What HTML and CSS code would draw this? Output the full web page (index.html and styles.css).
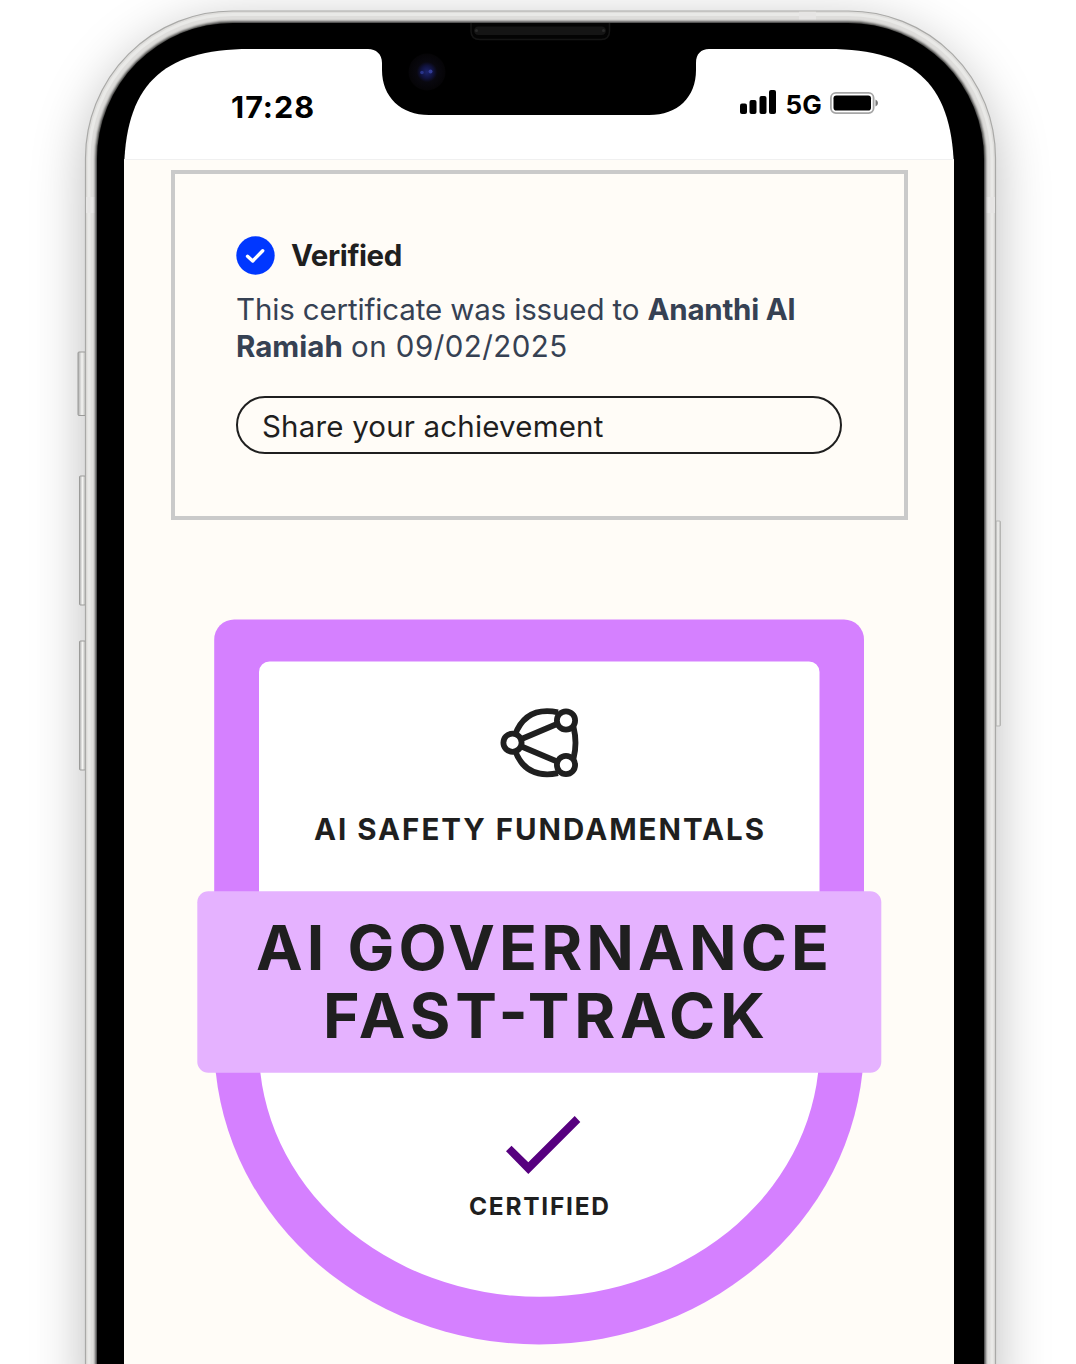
FILE: index.html
```html
<!DOCTYPE html>
<html lang="en">
<head>
<meta charset="utf-8">
<title>AI Safety Fundamentals certificate</title>
<link rel="stylesheet" href="styles.css">
</head>
<body>
<main class="stage">
  <div class="shadow"></div>
  <svg class="hardware" viewBox="0 0 1076 1364" aria-hidden="true">
    <defs>
      <linearGradient id="btn" x1="0" x2="1" y1="0" y2="0">
        <stop offset="0" stop-color="#aaa"/><stop offset=".5" stop-color="#f4f4f2"/><stop offset="1" stop-color="#b5b5b3"/>
      </linearGradient>
      <radialGradient id="lens">
        <stop offset="0" stop-color="#1c246e"/><stop offset=".35" stop-color="#10123c"/><stop offset=".55" stop-color="#09080f"/><stop offset="1" stop-color="#050406"/>
      </radialGradient>
      <filter id="soft" x="-5%" y="-5%" width="110%" height="110%"><feGaussianBlur stdDeviation="1.1"/></filter>
    </defs>
    <!-- side buttons -->
    <g fill="url(#btn)" stroke="#9b9b99" stroke-width="1">
      <rect x="78" y="352" width="8" height="63.500" rx="1"/>
      <rect x="79.500" y="476" width="6" height="129" rx="1"/>
      <rect x="79.500" y="641" width="6" height="129" rx="1"/>
      <rect x="995.500" y="521" width="5" height="205" rx="1" stroke="#b5b5b3"/>
    </g>
    <!-- metal band and bezel -->
    <rect x="85.500" y="11" width="910" height="1500" rx="147" fill="#dedddb" stroke="#a9a9a7" stroke-width="1.200"/>
    <rect x="89" y="14.500" width="903" height="1500" rx="144" fill="none" stroke="#e9e9e7" stroke-width="3"/>
    <path d="M86 197h9v16h-9zM986 197h9v16h-9zM799 11.700h17v8h-17z" fill="#e6e5e4"/>
    <rect x="96" y="22" width="889" height="1500" rx="137" fill="#000" stroke="#5d5d5b" stroke-width="2" filter="url(#soft)"/>
    <rect x="97" y="23" width="887" height="1500" rx="136" fill="#000"/>
    <!-- display -->
    <path d="M124 1364V175C124 86 161 49 250 49H828C917 49 954 86 954 175V1364Z" fill="#fff"/>
    <path d="M368 48V49C376 49 382 54 382 63V70C382 97 401 115 429 115H649C678 115 696 97 696 70V63C696 54 701 49 709 49V48Z" fill="#000"/>
    <path d="M471 23V31Q471 39.500 480 39.500H601Q609.500 39.500 609.500 31V23" fill="#040404" stroke="#151515" stroke-width="1.500"/>
    <rect x="474" y="26.500" width="132" height="8.500" rx="4.200" fill="#151515"/>
    <circle cx="476.500" cy="30.500" r="1.500" fill="#2a2a2a"/><circle cx="603.500" cy="30.500" r="1.500" fill="#2a2a2a"/>
    <circle cx="427" cy="72" r="18.500" fill="url(#lens)"/>
    <circle cx="422" cy="72.500" r="1.800" fill="#28348a"/><circle cx="430.500" cy="71.500" r="2" fill="#323d98"/>
  </svg>

  <section class="screen">
    <header class="status">
      <span class="time">17:28</span>
      <span class="signals">
        <svg class="bars" viewBox="0 0 36 24"><rect y="13.500" width="7" height="10.500" rx="2"/><rect x="9.500" y="10" width="7" height="14" rx="2"/><rect x="19.500" y="6" width="7" height="18" rx="2"/><rect x="29" width="7" height="24" rx="2"/></svg>
        <span class="network">5G</span>
        <svg class="battery" viewBox="0 0 48 22"><rect x=".9" y=".9" width="42.700" height="20.200" rx="5" fill="#fff" stroke="#a6a6a6" stroke-width="1.800"/><rect x="3.500" y="3.500" width="37.500" height="15" rx="2.800"/><path d="M45.500 7.500q2.500 1 2.500 3.500t-2.500 3.500z" fill="#777"/></svg>
      </span>
    </header>
    <div class="content">
      <article class="card">
        <h1 class="verified">
          <svg class="tick" viewBox="0 0 39 39"><circle cx="19.500" cy="19.500" r="19.200" fill="#0037ff"/><path d="M11.500 20.300l5.200 4.700 10-10.200" fill="none" stroke="#fff" stroke-width="3.400" stroke-linecap="round" stroke-linejoin="round"/></svg>
          <span class="verified-label">Verified</span>
        </h1>
        <p class="issued"><span class="line-a">This certificate was issued to</span> <strong class="name">Ananthi Al</strong><br><strong class="name surname">Ramiah</strong> <span class="line-b">on 09/02/2025</span></p>
        <button class="share" type="button">Share your achievement</button>
      </article>
      <svg class="badge" viewBox="197 619 685 726">
        <path d="M214.200 1043V639.500a20 20 0 0 1 20-20H844a20 20 0 0 1 20 20V1043A324.900 301.500 0 0 1 214.200 1043Z" fill="#d580ff"/>
        <path d="M259 1048V672a10.500 10.500 0 0 1 10.500-10.500H809a10.500 10.500 0 0 1 10.500 10.500V1048A280.250 248.800 0 0 1 259 1048Z" fill="#fff"/>
        <g fill="none" stroke="#1f1f1f" stroke-width="5.800">
          <path d="M515 735C522 716 536 708 558 712.300M515 750.500C522 769.500 536 777.500 558 773.200M573.500 727Q577.500 743 573.500 758.500M518 740.500L560.500 722.500M518 745L560.500 763"/>
          <g fill="#fff"><circle cx="512.500" cy="742.700" r="9.100"/><circle cx="566" cy="720.500" r="9.100"/><circle cx="566" cy="765" r="9.100"/></g>
        </g>
        <g class="badge-text">
          <text x="314" y="840" font-size="29.500" textLength="450">AI SAFETY FUNDAMENTALS</text>
          <rect x="197.300" y="891.300" width="684" height="181.400" rx="11" fill="#e5b2ff"/>
          <text x="256" y="970" font-size="62.500" textLength="573">AI GOVERNANCE</text>
          <text x="323" y="1038" font-size="62.500" textLength="442">FAST-TRACK</text>
          <text x="469" y="1215" font-size="24.500" textLength="140">CERTIFIED</text>
        </g>
        <path d="M506 1151.300l5.500-5.600 16.800 16.600 46.400-46.300 5.600 6-52 52z" fill="#57007f"/>
      </svg>
    </div>
  </section>
</main>
</body>
</html>
```
FILE: styles.css
```css
* { box-sizing: border-box; }
body { margin: 0; background: #fff; font-family: Inter, "Liberation Sans", sans-serif; }
svg { display: block; }
.stage { position: relative; width: 1076px; height: 1364px; overflow: hidden; padding: 49px 122px 0 124px; }
.shadow { position: absolute; left: 92px; top: 26px; width: 897px; height: 1500px; border-radius: 147px; box-shadow: 0 4px 54px 6px rgba(0, 0, 0, .28); }
.hardware { position: absolute; left: 0; top: 0; width: 1076px; height: 1364px; }
.screen { position: relative; height: 1315px; }
.status { display: flex; justify-content: space-between; height: 110px; padding: 40px 76px 0 107px; color: #000; }
.time { font-size: 30.500px; line-height: 36px; font-weight: 650; letter-spacing: 1px; }
.signals { display: flex; height: 26px; gap: 9px; align-items: flex-end; }
.bars { width: 36px; height: 24px; margin-bottom: 1px; }
.network { margin: 0 -1px -3px 0; font-size: 26px; line-height: 26px; font-weight: 650; letter-spacing: .2px; }
.battery { width: 48px; height: 22px; margin-bottom: 1px; }
.content { height: 1205px; padding: 10px 46px 0 47px; background: #fffcf7; border-top: 1px solid #f0f0f0; }
.card { width: 737px; height: 350px; padding: 62px 62px 0; border: 4px solid #cacaca; }
.verified { display: flex; align-items: center; gap: 16px; height: 39px; margin: 0 0 16px -1px; font-size: 29.500px; font-weight: 650; letter-spacing: -.4px; color: #1f1f1f; }
.verified-label { padding-bottom: 2px; }
.tick { width: 39px; height: 39px; }
.issued { margin: 0 0 31px -1px; font-size: 29.500px; line-height: 37px; color: #364153; white-space: nowrap; font-weight: 400; }
.line-a { letter-spacing: -.14px; }
.line-b { letter-spacing: .45px; }
.name { font-weight: 700; letter-spacing: -.25px; }
.surname { letter-spacing: 0; }
.share { display: block; width: 606px; height: 58px; margin-left: -1px; padding: 1px 24px 0; border: 2px solid #1f1f1f; border-radius: 29px; background: transparent; color: #1f1f1f; font: 400 29.500px Inter, sans-serif; letter-spacing: .18px; text-align: left; }
.badge { width: 685px; height: 726px; margin: 99px 0 0 26px; }
.badge-text { fill: #1f1f1f; font-weight: 700; }
```
